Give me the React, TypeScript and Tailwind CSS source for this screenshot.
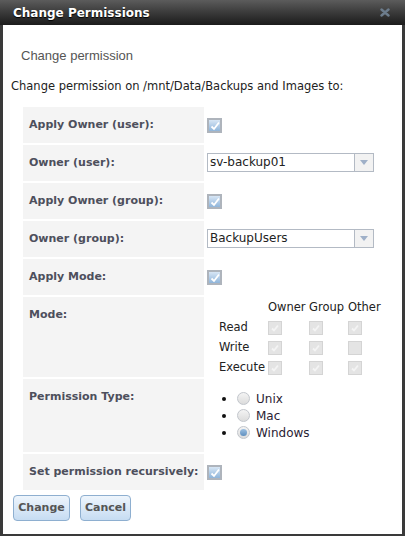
import React from "react";

const sans = { fontFamily: '"DejaVu Sans", Verdana, sans-serif' };

function Check({ checked = true, disabled = false }: { checked?: boolean; disabled?: boolean }) {
  if (disabled) {
    return (
      <span className="flex h-[14px] w-[14px] items-center justify-center border border-[#d4d4d4] bg-[#e4e4e4]">
        {checked && (
          <svg width="10" height="10" viewBox="0 0 10 10">
            <path d="M2 5.5 L4 7.5 L8 2.5" fill="none" stroke="#f4f4f4" strokeWidth="1.8" />
          </svg>
        )}
      </span>
    );
  }
  return (
    <span className="flex h-[15px] w-[15px] items-center justify-center border-2 border-[#aeb4bc] bg-gradient-to-b from-[#d7e6f5] to-[#8fb5da]">
      {checked && (
        <svg width="10" height="10" viewBox="0 0 10 10">
          <path d="M1.5 5.5 L4 8 L9 1.5" fill="none" stroke="#ffffff" strokeWidth="1.8" />
        </svg>
      )}
    </span>
  );
}

function Radio({ checked = false }: { checked?: boolean }) {
  return (
    <span className="flex h-[13px] w-[13px] items-center justify-center rounded-full border border-[#c2c6cc] bg-gradient-to-b from-[#f4f4f4] to-[#dcdcdc]">
      {checked && <span className="h-[7px] w-[7px] rounded-full bg-gradient-to-b from-[#9cc0e2] to-[#5f8fbf]" />}
    </span>
  );
}

function Select({ value }: { value: string }) {
  return (
    <div className="mt-[-3px] flex h-[19px] w-[167px] border border-[#b3bac4] bg-white">
      <span className="flex-1 pl-[2px] text-[12px] leading-[17px] text-[#222]" style={sans}>
        {value}
      </span>
      <span className="flex w-[19px] items-center justify-center border-l border-[#b3bac4] bg-[#f2f2f2]">
        <svg width="8" height="5" viewBox="0 0 8 5">
          <path d="M0 0 H8 L4 5 Z" fill="#9fb0c8" />
        </svg>
      </span>
    </div>
  );
}

const labelCls =
  "w-[181px] shrink-0 bg-[#f4f4f4] pl-[6px] pt-[11px] text-[11px] font-bold leading-[14px] text-[#4d4f5c]";

function Row({ label, children }: { label: string; children?: React.ReactNode }) {
  return (
    <div className="flex h-[36px]">
      <div className={labelCls} style={sans}>
        {label}
      </div>
      <div className="flex-1 pl-[3px] pt-[11px]">{children}</div>
    </div>
  );
}

export default function App() {
  const modes: [string, boolean[]][] = [
    ["Read", [true, true, true]],
    ["Write", [true, true, false]],
    ["Execute", [true, true, true]],
  ];
  return (
    <div className="h-[536px] w-[405px] overflow-hidden bg-[#3a3a3a]">
      <div className="flex h-[25px] items-center justify-between bg-gradient-to-b from-[#5c5c5c] to-[#1c1c1c] pl-[13px] pr-[15px]">
        <span className="text-[12px] font-bold text-white [text-shadow:0_1px_1px_#000]" style={sans}>
          Change Permissions
        </span>
        <svg width="10" height="9" viewBox="0 0 10 9">
          <path d="M1.5 1.5 L8.5 7.5 M8.5 1.5 L1.5 7.5" stroke="#6c7c8c" strokeWidth="2.4" strokeLinecap="round" />
        </svg>
      </div>
      <div className="mx-[3px] h-[509px] bg-white">
        <div className="pl-[18px] pt-[23px] text-[13px] leading-[16px] text-[#555]" style={{ fontFamily: '"Liberation Sans", Arial, sans-serif' }}>
          Change permission
        </div>
        <div className="pl-[8px] pt-[15px] text-[11.5px] leading-[14px] text-[#222]" style={sans}>
          Change permission on /mnt/Data/Backups and Images to:
        </div>
        <div className="ml-[20px] mt-[14px] flex flex-col gap-[2px]">
          <Row label="Apply Owner (user):">
            <Check />
          </Row>
          <Row label="Owner (user):">
            <Select value="sv-backup01" />
          </Row>
          <Row label="Apply Owner (group):">
            <Check />
          </Row>
          <Row label="Owner (group):">
            <Select value="BackupUsers" />
          </Row>
          <Row label="Apply Mode:">
            <Check />
          </Row>
          <div className="flex h-[80px]">
            <div className={labelCls} style={sans}>
              Mode:
            </div>
            <div
              className="grid flex-1 grid-cols-[49px_41px_39px_auto] grid-rows-[20px_20px_20px_20px] items-center pl-[15px] pt-[1px] text-[11.5px] text-[#222]"
              style={sans}
            >
              <span />
              <span>Owner</span>
              <span>Group</span>
              <span>Other</span>
              {modes.map(([name, vals]) => (
                <React.Fragment key={name}>
                  <span>{name}</span>
                  {vals.map((v, i) => (
                    <span key={i}>
                      <Check disabled checked={v} />
                    </span>
                  ))}
                </React.Fragment>
              ))}
            </div>
          </div>
          <div className="flex h-[73px]">
            <div className={labelCls} style={sans}>
              Permission Type:
            </div>
            <ul className="flex-1 pl-[18px] pt-[11px] text-[12px] text-[#2a2233]" style={sans}>
              {[
                ["Unix", false],
                ["Mac", false],
                ["Windows", true],
              ].map(([name, on]) => (
                <li key={name as string} className="flex h-[17px] items-center">
                  <span className="mr-[11px] h-[4px] w-[4px] rounded-full bg-[#111]" />
                  <Radio checked={on as boolean} />
                  <span className="ml-[6px]">{name}</span>
                </li>
              ))}
            </ul>
          </div>
          <Row label="Set permission recursively:">
            <Check />
          </Row>
        </div>
        <div className="ml-[10px] mt-[5px] flex gap-[10px]">
          <button
            className="h-[26px] w-[57px] rounded-[4px] border border-[#8eafd0] bg-gradient-to-b from-[#eef5fc] to-[#c6dcf2] text-[11px] font-bold text-[#555]"
            style={sans}
          >
            Change
          </button>
          <button
            className="h-[26px] w-[51px] rounded-[4px] border border-[#8eafd0] bg-gradient-to-b from-[#eef5fc] to-[#c6dcf2] text-[11px] font-bold text-[#555]"
            style={sans}
          >
            Cancel
          </button>
        </div>
      </div>
    </div>
  );
}
